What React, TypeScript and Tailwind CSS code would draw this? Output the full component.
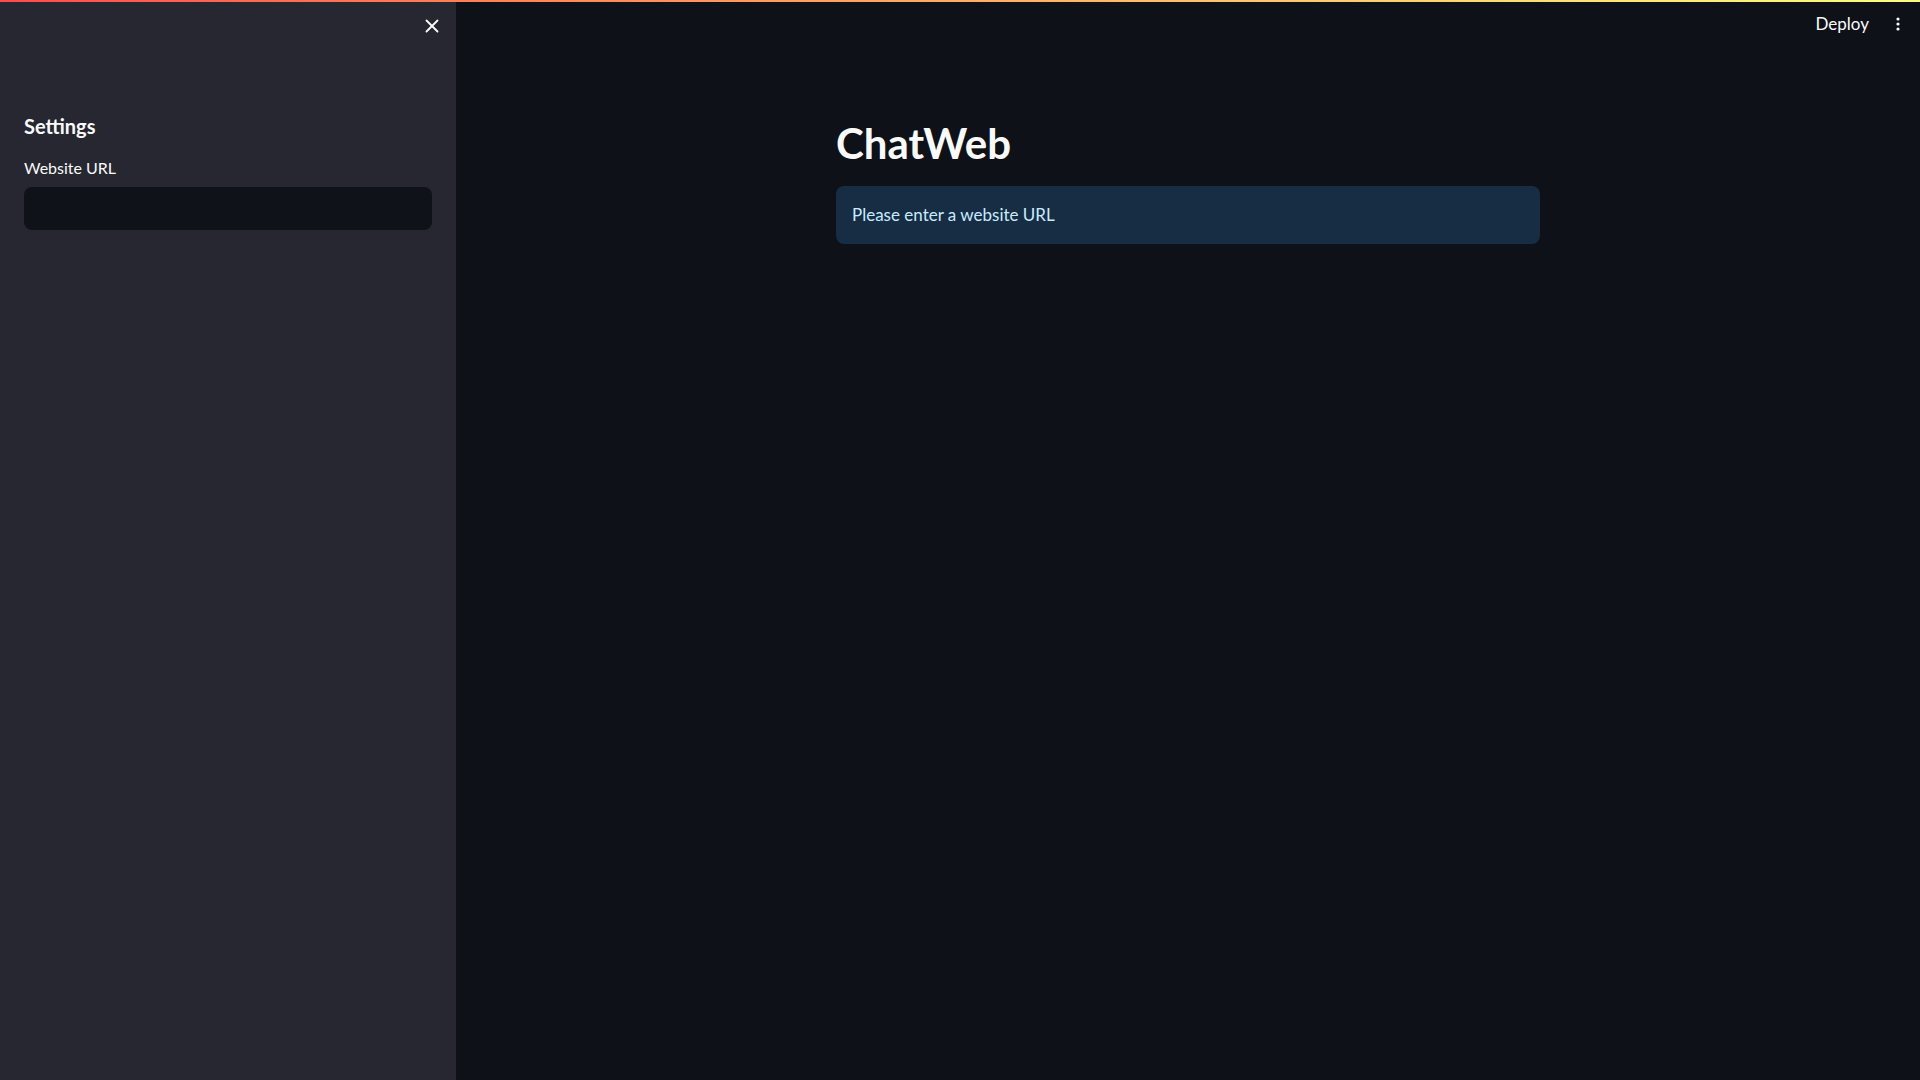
import { X } from "lucide-react";

export default function App() {
  return (
    <div className="relative flex h-screen w-full overflow-hidden bg-[#0e1117] font-['Source_Sans_Pro',Lato,sans-serif] text-[#fafafa]">
      <div className="absolute inset-x-0 top-0 z-10 h-[2px] bg-gradient-to-r from-[#ff4b4b] to-[#fffd80]" />

      <aside className="flex w-[456px] shrink-0 flex-col bg-[#262730] px-6">
        <div className="flex h-[52px] items-center justify-end">
          <button className="-mr-[16px] flex h-8 w-8 items-center justify-center text-[#fafafa]">
            <X size={22} strokeWidth={2} />
          </button>
        </div>
        <h2 className="mt-[62px] text-[20px] font-bold leading-[1.2]">Settings</h2>
        <label className="mt-[18px] text-[16px] leading-[1.5]">Website URL</label>
        <div className="mt-[7px] h-[43px] rounded-lg bg-[#10121a]" />
      </aside>

      <main className="flex flex-1 flex-col">
        <header className="flex h-[48px] items-center justify-end gap-[27px] pr-4">
          <span className="text-[17px] text-[#fafafa]">Deploy</span>
          <svg width="4" height="14" viewBox="0 0 4 14" className="mr-1 fill-[#fafafa]">
            <circle cx="2" cy="2" r="1.6" />
            <circle cx="2" cy="7" r="1.6" />
            <circle cx="2" cy="12" r="1.6" />
          </svg>
        </header>
        <div className="mx-auto w-[704px] pt-[70px]">
          <h1 className="text-[42px] font-bold leading-[1.2]">ChatWeb</h1>
          <div className="mt-[18px] rounded-lg bg-[#172d43] px-4 py-4 text-[17px] leading-[26px] text-[#c7ebff]">
            Please enter a website URL
          </div>
        </div>
      </main>
    </div>
  );
}
